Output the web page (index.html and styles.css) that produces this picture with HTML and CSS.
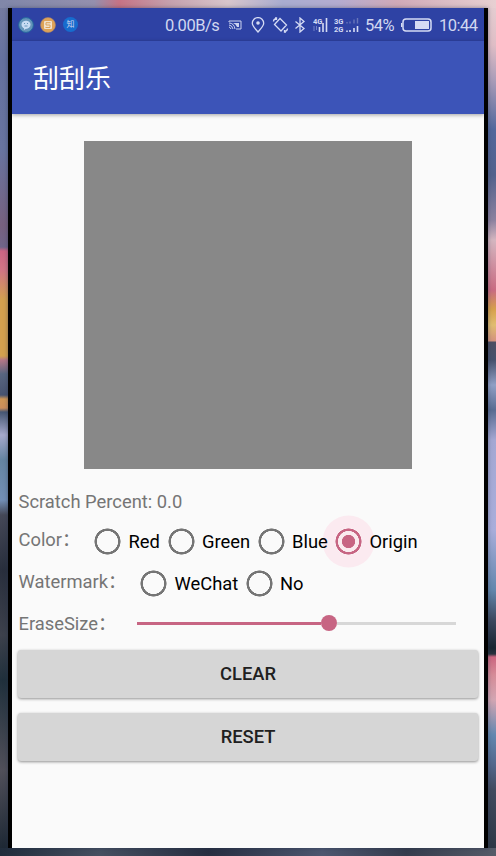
FILE: index.html
```html
<!DOCTYPE html>
<html lang="zh-CN">
<head>
<meta charset="utf-8">
<title>刮刮乐</title>
<link rel="stylesheet" href="styles.css">
</head>
<body>
<div class="wallpaper">
<main class="phone">
  <header class="status">
    <div class="notices">
      <svg class="notice" viewBox="0 0 16 16"><circle cx="8" cy="8" r="7.4" fill="#6595ba" stroke="#23679f"/><ellipse cx="8" cy="7.7" rx="4.5" ry="4" fill="#c8dcf3"/><path d="M6 10l0 3 3-2z" fill="#c8dcf3"/><path d="M6 6.500h1M9 6.500h1M6.500 9h3" stroke="#6595ba"/></svg>
      <svg class="notice" viewBox="0 0 16 16"><circle cx="8" cy="8" r="7.500" fill="#dda258" stroke="#a58069" stroke-width=".6"/><rect x="4" y="4" width="8" height="8" rx="1" fill="#f1e1cb"/><path d="M10.500 5.700H6V8h4v2.500H5.500" stroke="#dda258" fill="none"/></svg>
      <span class="zhi">知</span>
    </div>
    <span class="speed">0.00B/s</span>
    <svg class="cast" viewBox="0 0 14 10"><path d="M1 2V1h12v8H8" fill="none" stroke="#ccd3ef"/><path d="M5 3h6v4H9Q8 4 5 3" fill="#ccd3ef"/><path d="M1 3q5 0 6 6M1 5q3 0 4 4M1 7q1 0 2 2" fill="none" stroke="#ccd3ef"/></svg>
    <svg class="pin" viewBox="0 0 14 16"><path d="M7 15C4 11.500 1.300 9 1.300 6.300a5.700 5.700 0 0 1 11.400 0C12.700 9 10 11.500 7 15z" fill="none" stroke="#d5dbf4" stroke-width="1.300"/><circle cx="7" cy="6" r="1.800" fill="#d5dbf4"/></svg>
    <svg class="rotate" viewBox="0 0 16 16"><path d="M7.500 1.500L14 8l-5.500 6L2 7.500zM1 4.500q0-2.500 3-3M15 11.500q0 2.500-3 3M2.500 1H4v2M13.500 15H12v-2" fill="none" stroke="#d5dbf4" stroke-width="1.300"/></svg>
    <svg class="bluetooth" viewBox="0 0 12 16"><path d="M1.500 4.500l8.500 7L6 15V1l4 3.500-8.500 7" fill="none" stroke="#d5dbf4" stroke-width="1.300"/></svg>
    <svg class="signal" viewBox="0 0 15 16"><path d="M1 9v5M3.500 9v4" stroke="#7181c9"/><path d="M6.500 10V15M10 6v9M13.500 1v14" stroke="#d5dbf4" stroke-width="1.600"/><text x="0" y="6.500">4G</text></svg>
    <svg class="dual" viewBox="0 0 25 16"><text x="0" y="6.500">3G</text><text x="0" y="15.200">2G</text><path d="M13 5v1.500M16 4.500v2M20 2.500v4M23.500 1v5.500" stroke="#6876bb" stroke-width="1.400"/><path d="M13 13.500V15M16 13v2M20 11v4M23.500 9v6" stroke="#d5dbf4" stroke-width="1.600"/></svg>
    <span class="percent">54%</span>
    <svg class="battery" viewBox="0 0 31 14"><rect x="2" y="1" width="28" height="12" rx="3" fill="none" stroke="#d5dbf4" stroke-width="1.500"/><path d="M.7 5v4" stroke="#d5dbf4" stroke-width="1.400"/><path d="M14 3h14v8H14z" fill="#d5dbf4"/></svg>
    <time class="clock">10:44</time>
  </header>
  <h1 class="appbar">刮刮乐</h1>
  <div class="card"></div>
  <p class="score">Scratch Percent: 0.0</p>
  <div class="row color">
    <span class="label">Color：</span>
    <span class="radio red"><i class="ring"></i>Red</span>
    <span class="radio green"><i class="ring"></i>Green</span>
    <span class="radio blue"><i class="ring"></i>Blue</span>
    <span class="radio origin"><i class="ring checked"></i><b>Origin</b></span>
  </div>
  <div class="row mark">
    <span class="label">Watermark：</span>
    <span class="radio wechat"><i class="ring"></i>WeChat</span>
    <span class="radio"><i class="ring"></i>No</span>
  </div>
  <div class="row erase">
    <span class="label">EraseSize：</span>
    <div class="slider"><i class="fill"></i><i class="thumb"></i><i class="rest"></i></div>
  </div>
  <div class="actions"><button>CLEAR</button><button>RESET</button></div>
</main>
</div>
</body>
</html>
```
FILE: styles.css
```css
* { box-sizing: border-box; }
body { margin: 0; font-family: Roboto, "Noto Sans CJK SC", sans-serif; }
.wallpaper {
  width: 496px; height: 856px; padding: 8px;
  background:
    linear-gradient(90deg, #8087a9, #9490ae 19%, #c77385 24%, #c5a0ad 34%, #d8c6cc 46%, #a9acd0 57%, #b4acd0 68%, #d0aab8 80%, #e7d0d2) 0 0 / 496px 8px no-repeat,
    linear-gradient(90deg, #202c3b, #465061 20%, #272e41 42%, #4d5770 65%, #353c4d 82%, #555b68) 0 848px / 496px 8px no-repeat,
    linear-gradient(#777da0, #65719f 60px, #6874a0 150px, #77617f 225px, #70658a 247px, #cc6584 251px, #d27585 270px, #d3a14f 300px, #d3a14f 356px, #b57888 360px, #596681 374px, #485470 395px, #ce9655 399px, #cc8e5a 408px, #465773 412px, #a6a9cc 435px, #6585a2 460px, #738fb5 500px, #454857 515px, #292f3d 570px, #3d414c 635px, #20303c 680px, #51505a 770px, #192531) 0 0 / 8px 856px no-repeat,
    linear-gradient(#e5d0d3, #dfbec6 45px, #aa9db9 80px, #52679c 130px, #53628d 175px, #8b819f 220px, #d4b6c0 240px, #c96b82 290px, #d7a04c 309px, #e1bd71 325px, #d5937f 341px, #4d4f63 342px, #46516d 360px, #91a0c6 385px, #596c92 410px, #a4a8d3 440px, #a9aedb 530px, #6387ad 590px, #3d4960 620px, #192631 648px, #27333e 654px, #cc6680 657px, #d68c98 675px, #d2a6b3 700px, #6288b0 735px, #53678c 765px, #424b5f 790px, #2b3542) 488px 0 / 8px 856px no-repeat;
}
.phone {
  width: 480px; height: 840px; overflow: hidden; background: #fafafa;
  border: solid #000; border-width: 0 4px; box-shadow: 0 0 4px #222b4980;
  display: flex; flex-direction: column;
}
.status {
  flex: 0 0 33px; background: #2e42a4; color: #d1d7f0; display: flex;
  align-items: center; padding: 0 0 0 6px; font-size: 16.500px; letter-spacing: -.5px;
}
.status svg { display: block; flex: none; }
.status text { font: 700 7.500px Roboto, sans-serif; letter-spacing: 0; fill: #d5dbf4; }
.notices { display: flex; gap: 6px; width: 147px; flex: none; align-items: center; }
.notice { width: 16px; height: 16px; }
.zhi { width: 15px; height: 15px; border-radius: 50%; background: #176cce; font-size: 8px; line-height: 15px; text-align: center; margin-left: 1px; letter-spacing: 0; }
.speed, .percent, .clock { padding-top: 2px; flex: none; }
.speed { width: 63px; }
.cast { width: 14px; height: 10px; margin-right: 9px; }
.pin { width: 14px; height: 16px; margin-right: 7px; }
.rotate { width: 17px; height: 16px; margin-right: 5px; }
.bluetooth { width: 12px; height: 16px; margin-right: 7px; }
.signal { width: 15px; height: 16px; margin-right: 6px; }
.dual { width: 25px; height: 16px; margin-right: 6px; }
.percent { width: 36px; }
.battery { width: 31px; height: 14px; margin-right: 7px; }
.appbar {
  flex: 0 0 73px; margin: 0; padding: 3px 0 0 21px; background: #3c54b8; color: #fff;
  font-size: 26px; font-weight: 400; line-height: 70px; box-shadow: 0 1px 4px #0000005c;
}
.card { flex: 0 0 328px; width: 328px; margin: 27px auto 0 72px; background: #888; }
.score { flex: 0 0 51px; margin: 0; padding: 22px 0 0 6.500px; line-height: 22px; font-size: 18.350px; color: #757575; }
.row { flex: 0 0 42px; display: flex; align-items: center; padding-left: 6.500px; font-size: 18.350px; color: #000; }
.label { color: #757575; flex: none; line-height: 24px; margin-top: -2px; }
.color .label { width: 75.500px; }
.mark .label { width: 121.500px; }
.erase .label { width: 118.500px; margin-top: -1px; padding-top: 2px; }
.radio { display: flex; align-items: center; gap: 7.500px; flex: none; }
.red { width: 73.500px; }
.green { width: 90px; }
.blue { width: 77.500px; position: relative; z-index: 1; }
.wechat { width: 105.500px; }
.ring { width: 27px; height: 27px; border-radius: 50%; flex: none; background: radial-gradient(circle, transparent 10.300px, #757575 10.800px 12.800px, transparent 13.300px); }
.checked { background: radial-gradient(circle, #c76583 0 6.300px, #faebef 6.900px 10.300px, #c76583 10.800px 12.800px, #fbeaf0 13.300px); box-shadow: 0 0 0 12.500px #fbeaf0; }
.radio b { position: relative; font-weight: 400; }
.slider { display: flex; align-items: center; width: 319px; }
.fill { flex: 0 0 184px; height: 3px; background: #c76583; }
.thumb { flex: 0 0 16px; height: 16px; border-radius: 50%; background: #c76583; }
.rest { flex: 1; height: 3px; background: #d7d7d7; }
.erase { padding-bottom: 4px; }
.actions { display: flex; flex-direction: column; gap: 15px; padding: 4px 6px; }
button { height: 48px; flex: none; padding: 0 0 1px; border: 0; border-radius: 3px; background: #d6d6d6; color: #202020; font: 500 18.350px Roboto, sans-serif; box-shadow: 0 1px 3px #0000006b; }
```
